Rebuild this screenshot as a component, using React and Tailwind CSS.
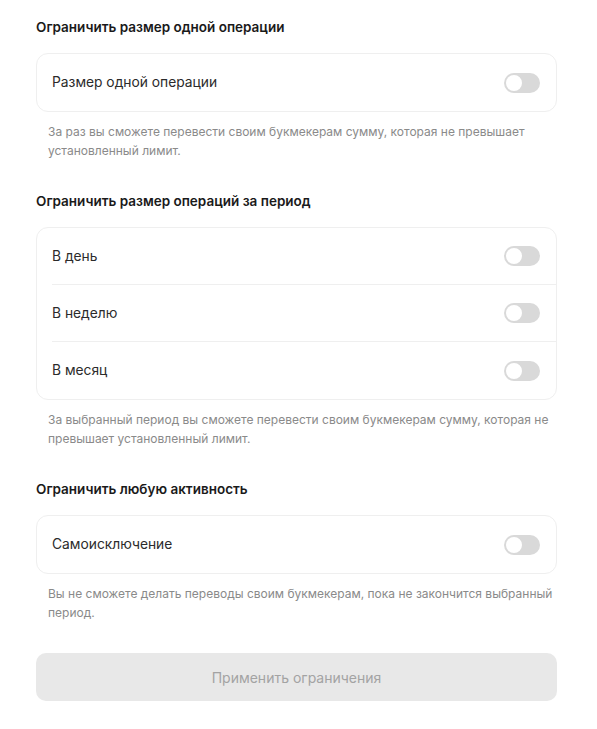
import React from "react";

function Toggle() {
  return (
    <div className="w-[36px] h-[20px] rounded-full bg-[#d9d9d9] p-[2px] flex items-center shrink-0">
      <div className="w-[16px] h-[16px] rounded-full bg-white" />
    </div>
  );
}

function Row({ label, divider }) {
  return (
    <div className="pl-[15px]">
      <div className={"flex items-center justify-between h-[57px] pr-4 " + (divider ? "border-b border-[#efefef]" : "")}>
        <span className="text-[13.8px] text-[#2b2b2b]">{label}</span>
        <Toggle />
      </div>
    </div>
  );
}

function Section({ title, rows, caption }) {
  return (
    <div className="flex flex-col">
      <h2 className="text-[13.5px] font-semibold text-[#1a1a1a] leading-[20px]">{title}</h2>
      <div className="mt-[16px] border border-[#efefef] rounded-[12px] bg-white">
        {rows.map((r, i) => (
          <Row key={r} label={r} divider={i < rows.length - 1} />
        ))}
      </div>
      <p className="mt-[10px] pl-3 pr-1 text-[12px] leading-[19px] text-[#8a8a8a]">{caption}</p>
    </div>
  );
}

export default function App() {
  return (
    <div className="bg-white min-h-[729px] w-[597px] pl-[36px] pr-[40px] pt-[17px] pb-[28px] flex flex-col gap-[31px]" style={{ fontFamily: "Inter, 'Noto Sans', sans-serif" }}>
      <Section
        title="Ограничить размер одной операции"
        rows={["Размер одной операции"]}
        caption="За раз вы сможете перевести своим букмекерам сумму, которая не превышает установленный лимит."
      />
      <Section
        title="Ограничить размер операций за период"
        rows={["В день", "В неделю", "В месяц"]}
        caption="За выбранный период вы сможете перевести своим букмекерам сумму, которая не превышает установленный лимит."
      />
      <Section
        title="Ограничить любую активность"
        rows={["Самоисключение"]}
        caption="Вы не сможете делать переводы своим букмекерам, пока не закончится выбранный период."
      />
      <button className="h-[48px] w-full rounded-[10px] bg-[#e8e8e8] text-[14px] text-[#a3a3a3]">
        Применить ограничения
      </button>
    </div>
  );
}
